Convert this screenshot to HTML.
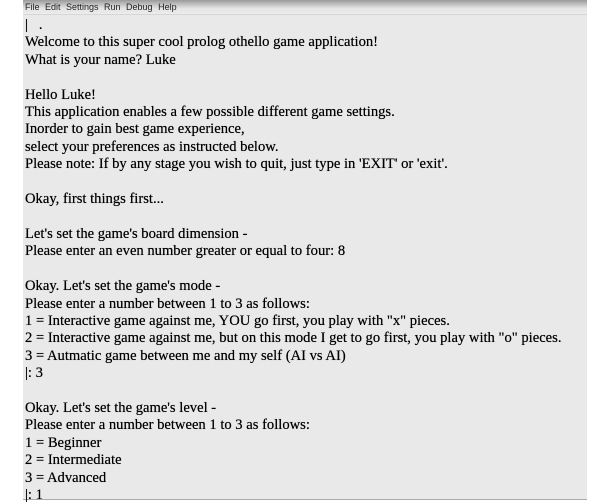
<!DOCTYPE html>
<html><head><style>
body{margin:0;width:610px;height:502px;background:#fff;overflow:hidden}
#p{position:absolute;left:23px;top:0;width:564px;height:499px;background:#e9e9e9;border-bottom:1px solid #aaa}
#m{height:14px;background:linear-gradient(#9a9a9a,#e4e4e4 60%,#ececec);border-bottom:1px solid #d6d6d6;font:9px "Liberation Sans",sans-serif;color:#222;line-height:14px;padding-left:2px;word-spacing:3px}
#t{position:absolute;left:2px;top:17px;font:14.6px "Liberation Serif",serif;line-height:17.4px;color:#000;white-space:pre;text-shadow:0 0 0.4px #000}
</style></head><body><div id="p">
<div id="m">File Edit Settings Run Debug Help</div>
<div id="t">|   .
Welcome to this super cool prolog othello game application!
What is your name? Luke

Hello Luke!
This application enables a few possible different game settings.
Inorder to gain best game experience,
select your preferences as instructed below.
Please note: If by any stage you wish to quit, just type in 'EXIT' or 'exit'.

Okay, first things first...

Let's set the game's board dimension -
Please enter an even number greater or equal to four: 8

Okay. Let's set the game's mode -
Please enter a number between 1 to 3 as follows:
1 = Interactive game against me, YOU go first, you play with "x" pieces.
2 = Interactive game against me, but on this mode I get to go first, you play with "o" pieces.
3 = Autmatic game between me and my self (AI vs AI)
|: 3

Okay. Let's set the game's level -
Please enter a number between 1 to 3 as follows:
1 = Beginner
2 = Intermediate
3 = Advanced
|: 1</div>
</div></body></html>
